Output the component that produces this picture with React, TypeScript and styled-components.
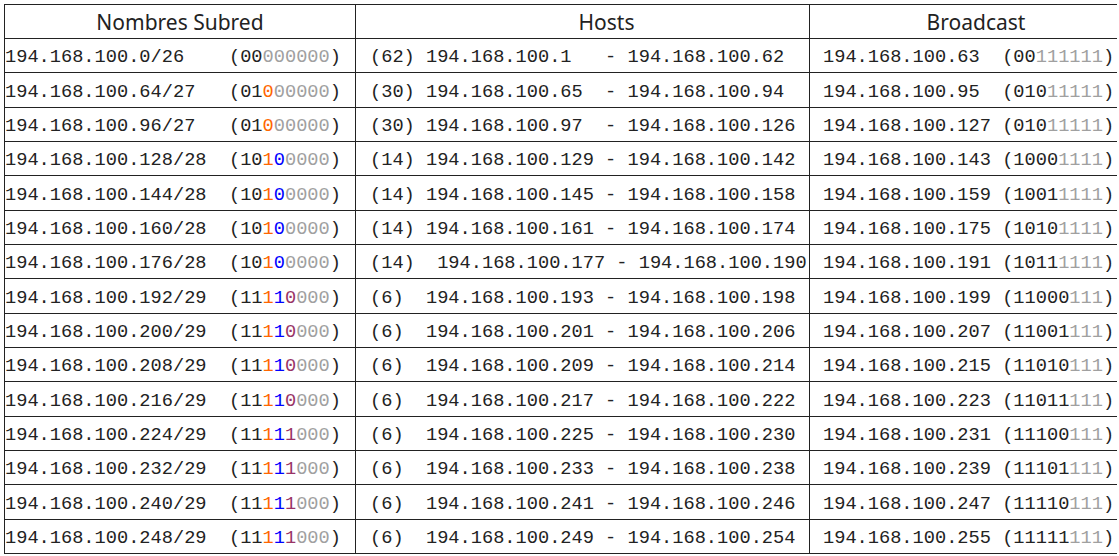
import styled, { createGlobalStyle } from 'styled-components';

const GlobalStyle = createGlobalStyle`
  body {
    margin: 4px 2px 0 4px;
    background: #fff;
  }
`;

const Table = styled.table`
  border-collapse: collapse;
  table-layout: fixed;
  width: 1114px;
  color: #222;
`;

const Head = styled.th<{ $width: number; $shift: number }>`
  box-sizing: border-box;
  width: ${({ $width }) => $width}px;
  height: 34px;
  padding: 0 0 0 ${({ $shift }) => $shift}px;
  border: 1px solid #222;
  font-family: 'Noto Sans', 'Open Sans', sans-serif;
  font-size: 21px;
  font-weight: 400;
  text-align: center;
  vertical-align: middle;
`;

const Row = styled.tr`
  height: 34.35px;
`;

const Cell = styled.td<{ $pad: number }>`
  padding: 3px 0 0 ${({ $pad }) => $pad}px;
  border: 1px solid #222;
  font-family: 'Liberation Mono', 'Courier New', monospace;
  font-size: 18.67px;
  white-space: pre;
  overflow: visible;
  vertical-align: middle;
`;

const Bit = styled.span<{ $tone: string }>`
  color: ${({ $tone }) => $tone};
`;

const tones: Record<string, string> = {
  k: '#222',
  o: '#ff6600',
  b: '#0000ff',
  p: '#993366',
  g: '#a0a0a0',
};

interface Subnet {
  net: string;
  netBits: string;
  netMask: string;
  hosts: string;
  bcast: string;
  bcastBits: string;
  bcastBlack: number;
}

const maskFor: Record<number, string> = {
  26: 'kkgggggg',
  27: 'kkoggggg',
  28: 'kkobgggg',
  29: 'kkobpggg',
};

function make(
  net: string,
  prefix: number,
  netBits: string,
  hosts: string,
  bcast: string,
  bcastBits: string,
): Subnet {
  return {
    net: `194.168.100.${net}/${prefix}`,
    netBits,
    netMask: maskFor[prefix],
    hosts,
    bcast: `194.168.100.${bcast}`,
    bcastBits,
    bcastBlack: prefix - 24,
  };
}

const subnets: Subnet[] = [
  make('0', 26, '00000000', '(62) 194.168.100.1   - 194.168.100.62', '63', '00111111'),
  make('64', 27, '01000000', '(30) 194.168.100.65  - 194.168.100.94', '95', '01011111'),
  make('96', 27, '01000000', '(30) 194.168.100.97  - 194.168.100.126', '127', '01011111'),
  make('128', 28, '10100000', '(14) 194.168.100.129 - 194.168.100.142', '143', '10001111'),
  make('144', 28, '10100000', '(14) 194.168.100.145 - 194.168.100.158', '159', '10011111'),
  make('160', 28, '10100000', '(14) 194.168.100.161 - 194.168.100.174', '175', '10101111'),
  make('176', 28, '10100000', '(14)  194.168.100.177 - 194.168.100.190', '191', '10111111'),
  make('192', 29, '11110000', '(6)  194.168.100.193 - 194.168.100.198', '199', '11000111'),
  make('200', 29, '11110000', '(6)  194.168.100.201 - 194.168.100.206', '207', '11001111'),
  make('208', 29, '11110000', '(6)  194.168.100.209 - 194.168.100.214', '215', '11010111'),
  make('216', 29, '11110000', '(6)  194.168.100.217 - 194.168.100.222', '223', '11011111'),
  make('224', 29, '11111000', '(6)  194.168.100.225 - 194.168.100.230', '231', '11100111'),
  make('232', 29, '11111000', '(6)  194.168.100.233 - 194.168.100.238', '239', '11101111'),
  make('240', 29, '11111000', '(6)  194.168.100.241 - 194.168.100.246', '247', '11110111'),
  make('248', 29, '11111000', '(6)  194.168.100.249 - 194.168.100.254', '255', '11111111'),
];

function Bits({ bits, mask }: { bits: string; mask: string }) {
  return (
    <>
      (
      {bits.split('').map((b, i) => (
        <Bit key={i} $tone={tones[mask[i]]}>
          {b}
        </Bit>
      ))}
      )
    </>
  );
}

export default function App() {
  return (
    <>
      <GlobalStyle />
      <Table>
        <thead>
          <tr>
            <Head $width={351} $shift={0}>Nombres Subred</Head>
            <Head $width={454} $shift={48}>Hosts</Head>
            <Head $width={309} $shift={24}>Broadcast</Head>
          </tr>
        </thead>
        <tbody>
          {subnets.map((s) => {
            const bcastMask = 'k'.repeat(s.bcastBlack) + 'g'.repeat(8 - s.bcastBlack);
            return (
              <Row key={s.net}>
                <Cell $pad={0}>
                  {s.net.padEnd(20, ' ')}
                  <Bits bits={s.netBits} mask={s.netMask} />
                </Cell>
                <Cell $pad={14}>{s.hosts}</Cell>
                <Cell $pad={13}>
                  {s.bcast.padEnd(16, ' ')}
                  <Bits bits={s.bcastBits} mask={bcastMask} />
                </Cell>
              </Row>
            );
          })}
        </tbody>
      </Table>
    </>
  );
}
